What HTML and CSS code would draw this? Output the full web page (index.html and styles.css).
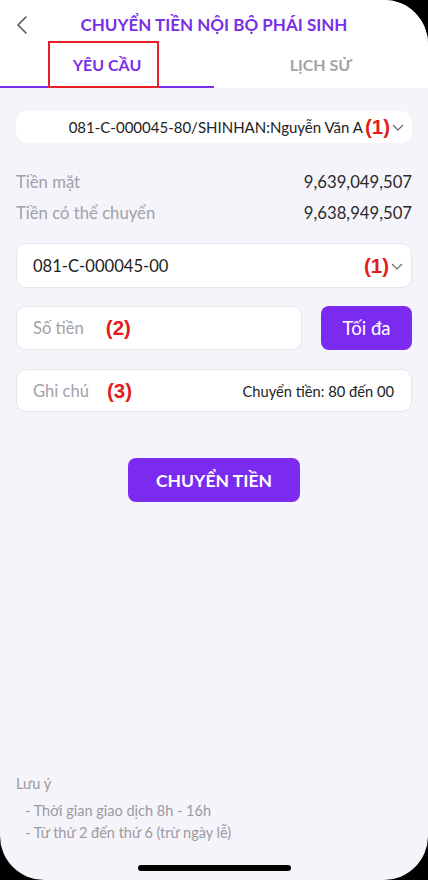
FILE: index.html
```html
<!DOCTYPE html>
<html>
<head>
  <meta charset="UTF-8">
  <title>Chuyển tiền nội bộ phái sinh</title>
  <link rel="stylesheet" href="styles.css">
</head>
<body>
  <div class="screen">
    <div class="header">
      <button class="back-btn" aria-label="Back">
        <svg width="12" height="20" viewBox="0 0 12 20"><path d="M10 2 L2 10 L10 18" fill="none" stroke="#555" stroke-width="1.6" stroke-linecap="round" stroke-linejoin="round"/></svg>
      </button>
      <h1>CHUYỂN TIỀN NỘI BỘ PHÁI SINH</h1>
    </div>

    <div class="tabs">
      <div class="tab active"><span class="tab-label">YÊU CẦU</span></div>
      <div class="tab">LỊCH SỬ</div>
    </div>

    <div class="content">
      <div class="account-select">
        <span class="account-text">081-C-000045-80/SHINHAN:Nguyễn Văn A</span>
        <span class="mark">(1)</span>
        <svg class="chevron" width="12" height="7" viewBox="0 0 12 7"><path d="M1 1 L6 6 L11 1" fill="none" stroke="#666" stroke-width="1.1"/></svg>
      </div>

      <div class="balances">
        <div class="balance-row">
          <span class="balance-label">Tiền mặt</span>
          <span class="balance-value">9,639,049,507</span>
        </div>
        <div class="balance-row">
          <span class="balance-label">Tiền có thể chuyển</span>
          <span class="balance-value">9,638,949,507</span>
        </div>
      </div>

      <div class="field select-field">
        <span class="field-text">081-C-000045-00</span>
        <span class="mark">(1)</span>
        <svg class="chevron" width="12" height="7" viewBox="0 0 12 7"><path d="M1 1 L6 6 L11 1" fill="none" stroke="#666" stroke-width="1.1"/></svg>
      </div>

      <div class="amount-row">
        <div class="field amount-field">
          <span class="placeholder">Số tiền</span>
          <span class="mark amount-mark">(2)</span>
        </div>
        <button class="max-btn">Tối đa</button>
      </div>

      <div class="field note-field">
        <span class="placeholder">Ghi chú</span>
        <span class="mark note-mark">(3)</span>
        <span class="note-text">Chuyển tiền: 80 đến 00</span>
      </div>

      <div class="submit-wrap">
        <button class="submit-btn">CHUYỂN TIỀN</button>
      </div>

      <div class="notes">
        <div class="notes-title">Lưu ý</div>
        <div class="notes-line">- Thời gian giao dịch 8h - 16h</div>
        <div class="notes-line">- Từ thứ 2 đến thứ 6 (trừ ngày lễ)</div>
      </div>
    </div>

    <div class="home-bar"></div>
  </div>
</body>
</html>
```

FILE: styles.css
```css
html, body {
  margin: 0;
  padding: 0;
  background-color: #000;
}

body {
  font-family: Lato, "Noto Sans", sans-serif;
  color: #222;
}

.screen {
  width: 428px;
  height: 880px;
  background-color: #f5f4fa;
  border-radius: 0 44px 44px 44px;
  overflow: hidden;
  display: flex;
  flex-direction: column;
}

.header {
  height: 48px;
  background-color: white;
  display: flex;
  align-items: center;
  justify-content: center;
  position: relative;
}

.back-btn {
  position: absolute;
  left: 15px;
  top: 15px;
  background: none;
  border: none;
  padding: 0;
  width: 14px;
  height: 20px;
}

.header h1 {
  margin: 0;
  font-size: 17px;
  font-weight: bold;
  color: #7a2fe6;
}

.tabs {
  height: 40px;
  background-color: white;
  display: flex;
}

.tab {
  flex: 1;
  display: flex;
  align-items: center;
  justify-content: center;
  font-size: 16px;
  font-weight: bold;
  color: #a3a3a8;
  padding-bottom: 5px;
  box-sizing: border-box;
  border-bottom: 2px solid transparent;
}

.tab.active {
  color: #7a2fe6;
  border-bottom-color: #7a2fe6;
  position: relative;
}

/* red highlight box drawn over the active tab */
.tab.active::after {
  content: "";
  position: absolute;
  left: 48px;
  top: -7px;
  width: 107px;
  height: 43px;
  border: 2px solid #e8202a;
}

.content {
  flex: 1;
  padding: 23px 16px 0 18px;
  display: flex;
  flex-direction: column;
}

.account-select {
  height: 32px;
  background-color: white;
  border-radius: 12px;
  display: flex;
  align-items: center;
  justify-content: flex-end;
  padding-right: 8px;
  margin-left: -2px;
}

.account-text {
  font-size: 15px;
  color: #222;
  margin-right: 2px;
}

.mark {
  font-family: "Liberation Sans", Arial, sans-serif;
  font-weight: bold;
  font-size: 20.5px;
  color: #e21b1b;
}

.chevron {
  margin-left: 2px;
  margin-top: 1px;
}

.balances {
  margin-top: 23px;
  margin-bottom: 15px;
  margin-left: -2px;
}

.balance-row {
  display: flex;
  justify-content: space-between;
  align-items: center;
  height: 31px;
  font-size: 16.7px;
}

.balance-label {
  color: #a1a1a6;
}

.balance-value {
  color: #2a2a2a;
}

.field {
  background-color: white;
  border: 1px solid #e6e6eb;
  border-radius: 10px;
  display: flex;
  align-items: center;
  padding: 0 16px;
  box-sizing: border-box;
  margin-left: -2px;
}

.select-field {
  height: 45px;
  padding-right: 8px;
}

.field-text {
  flex: 1;
  font-size: 16.6px;
  color: #222;
}

.amount-row {
  display: flex;
  gap: 19px;
  margin-top: 18px;
}

.amount-field {
  flex: 1;
  height: 44px;
}

.placeholder {
  font-size: 16.6px;
  color: #a1a1a6;
}

.amount-mark {
  margin-left: 22px;
}

.note-mark {
  margin-left: 18px;
}

.max-btn {
  width: 91px;
  height: 44px;
  border: none;
  border-radius: 8px;
  background-color: #7b2af0;
  color: white;
  font-family: Lato, sans-serif;
  font-size: 18.5px;
}

.note-field {
  height: 43px;
  margin-top: 19px;
  padding-right: 17px;
}

.note-text {
  margin-left: auto;
  font-size: 14.7px;
  color: #222;
}

.submit-wrap {
  display: flex;
  justify-content: center;
  margin-top: 46px;
  margin-left: -2px;
}

.submit-btn {
  width: 172px;
  height: 44px;
  border: none;
  border-radius: 8px;
  background-color: #7b2af0;
  color: white;
  font-family: Lato, sans-serif;
  font-size: 17.5px;
  font-weight: bold;
}

.notes {
  margin-top: auto;
  margin-left: -2px;
  padding-bottom: 21px;
  color: #9a9aa0;
}

.notes-title {
  font-size: 14.5px;
  margin-bottom: 8px;
}

.notes-line {
  font-size: 14.5px;
  line-height: 22px;
  padding-left: 9px;
}

.home-bar {
  width: 153px;
  height: 6px;
  border-radius: 3px;
  background-color: #000;
  margin: 0 auto 9px;
}
```
